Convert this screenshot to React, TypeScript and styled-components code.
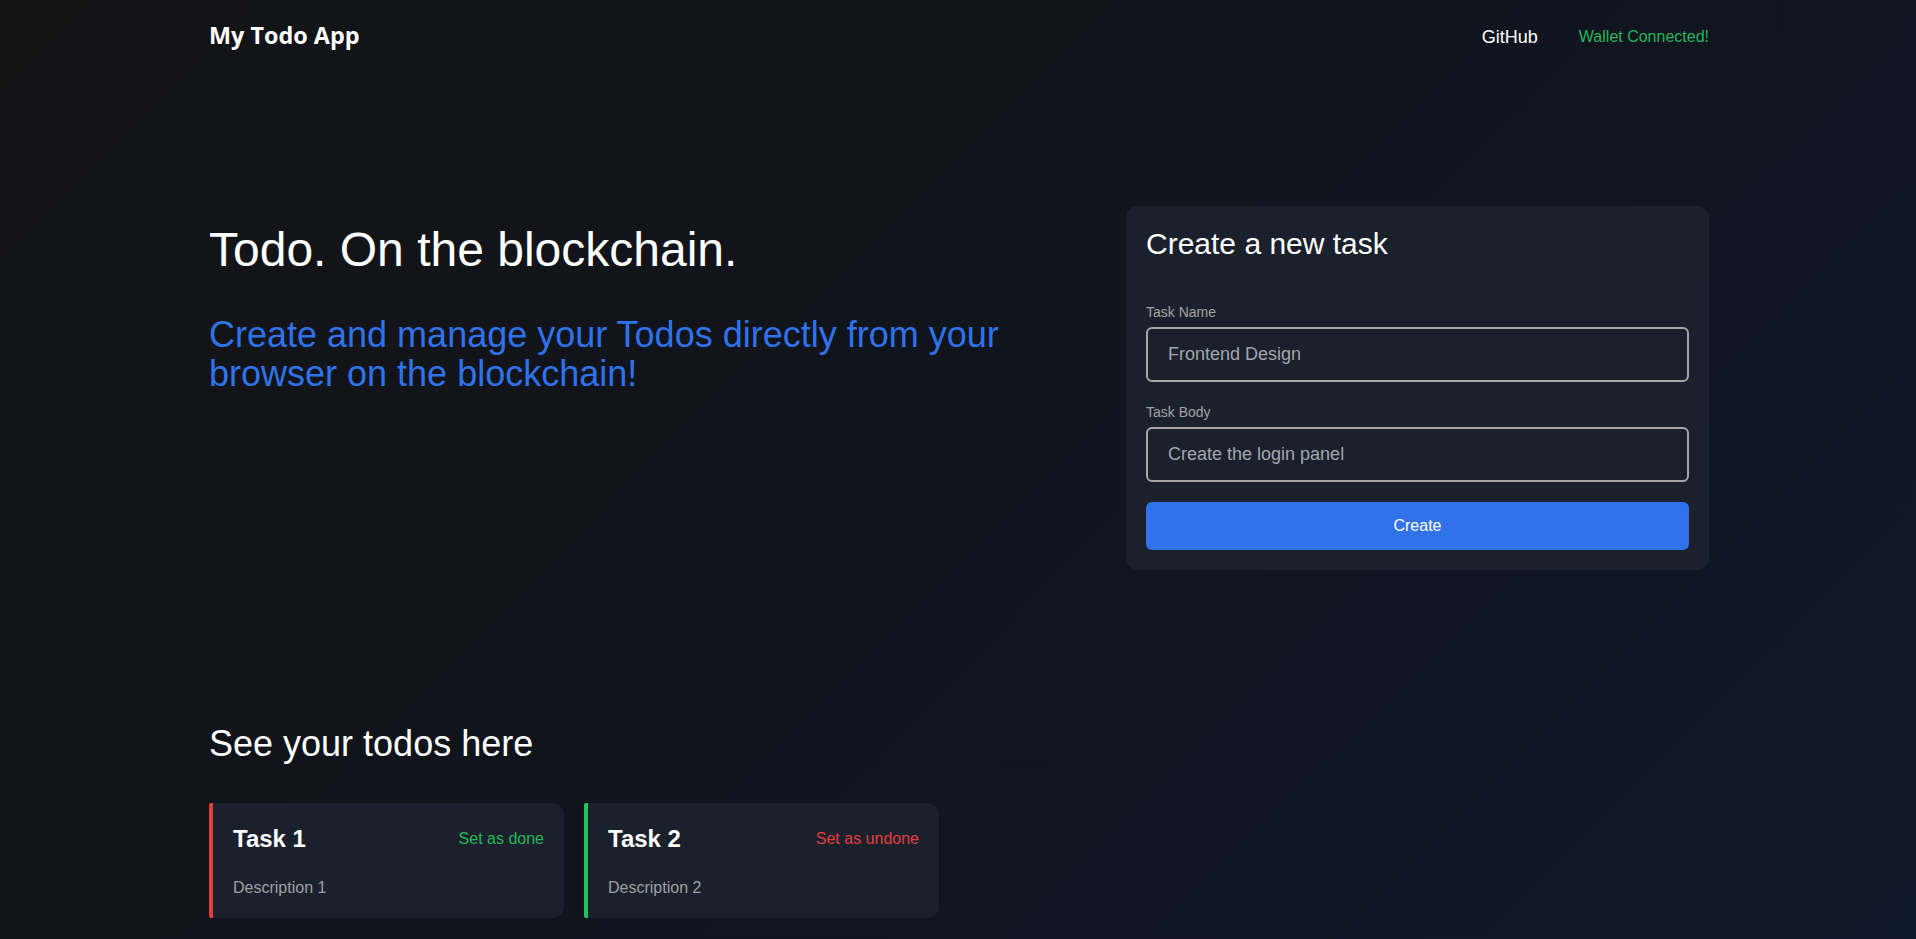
import React from "react";
import styled, { createGlobalStyle } from "styled-components";

const GlobalStyle = createGlobalStyle`
  html, body {
    margin: 0;
    padding: 0;
  }
  body {
    font-family: "Liberation Sans", Arial, sans-serif;
    color: #ffffff;
    background: #111318;
  }
  * { box-sizing: border-box; }
`;

const Page = styled.div`
  min-height: 100vh;
  background: linear-gradient(135deg, #141415 0%, #10141c 45%, #0f172a 100%);
`;

const Container = styled.div`
  max-width: 1502px;
  margin: 0 auto;
  padding-left: 2px;
`;

const Header = styled.header`
  height: 74px;
  display: flex;
  align-items: center;
  justify-content: space-between;
`;

const Logo = styled.div`
  font-family: "Open Sans", "Noto Sans", sans-serif;
  font-weight: 700;
  font-size: 23.4px;
  line-height: 32px;
  padding-bottom: 5px;
  color: #ffffff;
`;

const Nav = styled.nav`
  display: flex;
  align-items: center;
  gap: 41px;
`;

const NavLink = styled.a`
  font-size: 18px;
  color: #ffffff;
  text-decoration: none;
`;

const WalletStatus = styled.span`
  font-size: 16px;
  color: #22b85a;
`;

const Hero = styled.section`
  display: flex;
  align-items: flex-start;
  justify-content: space-between;
  padding-top: 132px;
`;

const HeroText = styled.div`
  flex: 0 0 840px;
  padding-top: 15px;
`;

const HeroTitle = styled.h1`
  margin: 0;
  font-size: 48px;
  font-weight: 400;
  line-height: 1.2;
  color: #ffffff;
`;

const HeroSubtitle = styled.h2`
  margin: 36px 0 0;
  font-size: 36px;
  font-weight: 400;
  line-height: 1.1;
  color: #3072e9;
`;

const FormCard = styled.div`
  width: 583px;
  background: #1a202c;
  border-radius: 12px;
  padding: 20px;
`;

const FormTitle = styled.h3`
  margin: 0 0 40px;
  font-size: 30px;
  font-weight: 400;
  line-height: 1.2;
  color: #ffffff;
`;

const Field = styled.div`
  display: flex;
  flex-direction: column;
  margin-bottom: 20px;
`;

const Label = styled.label`
  font-size: 14px;
  line-height: 21px;
  color: #a3a3a3;
  margin-bottom: 4px;
`;

const Input = styled.input`
  height: 55px;
  width: 100%;
  background: transparent;
  border: 2px solid #a7a7a7;
  border-radius: 6px;
  padding: 0 20px;
  font-family: "Liberation Sans", Arial, sans-serif;
  font-size: 18px;
  color: #a3a6ab;
  outline: none;
`;

const PrimaryButton = styled.button`
  width: 100%;
  height: 48px;
  border: none;
  border-radius: 6px;
  background: #3072e9;
  color: #ffffff;
  font-family: "Liberation Sans", Arial, sans-serif;
  font-size: 16px;
  cursor: pointer;
`;

const TodosSection = styled.section`
  padding-top: 152px;
`;

const SectionTitle = styled.h2`
  margin: 0 0 38px;
  font-size: 36px;
  font-weight: 400;
  line-height: 1.2;
  color: #ffffff;
`;

const TodoList = styled.div`
  display: flex;
  flex-wrap: wrap;
  gap: 20px;
`;

const TodoCard = styled.div<{ $accent: string }>`
  width: 355px;
  background: #1a202c;
  border-left: 4px solid ${(p) => p.$accent};
  border-radius: 2px 12px 12px 2px;
  padding: 20px 20px 18px;
`;

const TodoHeader = styled.div`
  display: flex;
  align-items: center;
  justify-content: space-between;
  height: 31px;
  margin-bottom: 22px;
`;

const TodoTitle = styled.div`
  font-size: 24px;
  font-weight: 700;
  color: #ffffff;
`;

const ToggleLink = styled.span<{ $color: string }>`
  font-size: 16px;
  color: ${(p) => p.$color};
  cursor: pointer;
`;

const TodoBody = styled.div`
  font-size: 16px;
  line-height: 24px;
  color: #a0a0a0;
`;

const todos = [
  { title: "Task 1", body: "Description 1", done: false },
  { title: "Task 2", body: "Description 2", done: true },
];

export default function App() {
  return (
    <Page>
      <GlobalStyle />
      <Container>
        <Header>
          <Logo>My Todo App</Logo>
          <Nav>
            <NavLink href="#">GitHub</NavLink>
            <WalletStatus>Wallet Connected!</WalletStatus>
          </Nav>
        </Header>
        <Hero>
          <HeroText>
            <HeroTitle>Todo. On the blockchain.</HeroTitle>
            <HeroSubtitle>
              Create and manage your Todos directly from your browser on the blockchain!
            </HeroSubtitle>
          </HeroText>
          <FormCard>
            <FormTitle>Create a new task</FormTitle>
            <Field>
              <Label>Task Name</Label>
              <Input defaultValue="Frontend Design" />
            </Field>
            <Field>
              <Label>Task Body</Label>
              <Input defaultValue="Create the login panel" />
            </Field>
            <PrimaryButton>Create</PrimaryButton>
          </FormCard>
        </Hero>
        <TodosSection>
          <SectionTitle>See your todos here</SectionTitle>
          <TodoList>
            {todos.map((t) => (
              <TodoCard key={t.title} $accent={t.done ? "#22c55e" : "#e53e3e"}>
                <TodoHeader>
                  <TodoTitle>{t.title}</TodoTitle>
                  <ToggleLink $color={t.done ? "#e53e3e" : "#22b85a"}>
                    {t.done ? "Set as undone" : "Set as done"}
                  </ToggleLink>
                </TodoHeader>
                <TodoBody>{t.body}</TodoBody>
              </TodoCard>
            ))}
          </TodoList>
        </TodosSection>
      </Container>
    </Page>
  );
}
